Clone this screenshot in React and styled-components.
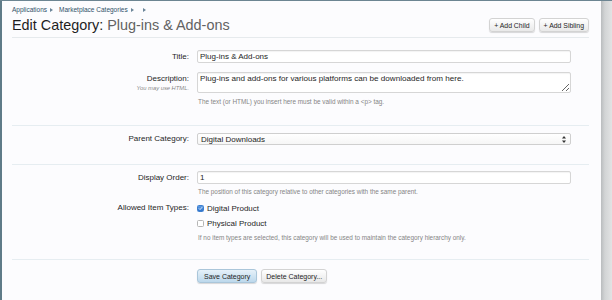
import React from "react";
import styled, { createGlobalStyle } from "styled-components";

const GlobalStyle = createGlobalStyle`
  html, body {
    margin: 0;
    padding: 0;
  }
  body {
    font-family: "Liberation Sans", Arial, sans-serif;
    background: #fcfcfe;
    color: #222;
  }
`;

function Check() {
  return (
    <svg width="7" height="7" viewBox="0 0 8 8">
      <path d="M1.8 4.2 L3.3 5.7 L6.3 2.3" fill="none" stroke="#fff" strokeWidth="1.3" strokeLinecap="round" strokeLinejoin="round" />
    </svg>
  );
}

function Arrows() {
  return (
    <svg width="4" height="7" viewBox="0 0 4 7">
      <path d="M2 0 L4 2.6 L0 2.6 Z" fill="#333" />
      <path d="M2 7 L4 4.4 L0 4.4 Z" fill="#333" />
    </svg>
  );
}

function App() {
  return (
    <>
      <GlobalStyle />
      <Page>
        <Main>
          <Header>
            <Breadcrumbs>
              <Crumb>Applications</Crumb>
              <Crumb>Marketplace Categories</Crumb>
              <Crumb />
            </Breadcrumbs>
            <TitleBar>
              <Title>
                Edit Category: <Subtitle>Plug-ins &amp; Add-ons</Subtitle>
              </Title>
              <TopButtons>
                <HeaderButton>+ Add Child</HeaderButton>
                <HeaderButton>+ Add Sibling</HeaderButton>
              </TopButtons>
            </TitleBar>
          </Header>

          <Section $top={12} $bottom={19}>
            <Row>
              <Label>Title:</Label>
              <Field>
                <TextInput defaultValue="Plug-ins & Add-ons" />
              </Field>
            </Row>
            <Row $gap={9}>
              <Label>
                Description:
                <SubLabel>You may use HTML.</SubLabel>
              </Label>
              <Field>
                <TextArea defaultValue="Plug-ins and add-ons for various platforms can be downloaded from here." />
                <Hint>The text (or HTML) you insert here must be valid within a &lt;p&gt; tag.</Hint>
              </Field>
            </Row>
          </Section>

          <Section $top={7} $bottom={19}>
            <Row>
              <Label $line={12}>Parent Category:</Label>
              <Field>
                <SelectBox>
                  <span>Digital Downloads</span>
                  <Arrows />
                </SelectBox>
              </Field>
            </Row>
          </Section>

          <Section $top={6} $bottom={17}>
            <Row>
              <Label>Display Order:</Label>
              <Field>
                <TextInput defaultValue="1" />
                <Hint $top={4}>The position of this category relative to other categories with the same parent.</Hint>
              </Field>
            </Row>
            <Row $gap={6}>
              <Label $line={12}>Allowed Item Types:</Label>
              <Field>
                <CheckRow>
                  <CheckBox $checked>
                    <Check />
                  </CheckBox>
                  Digital Product
                </CheckRow>
                <CheckRow $top={3}>
                  <CheckBox />
                  Physical Product
                </CheckRow>
                <Hint $top={5}>If no item types are selected, this category will be used to maintain the category hierarchy only.</Hint>
              </Field>
            </Row>
          </Section>

          <Row $gap={9}>
            <span />
            <SubmitButtons>
              <FormButton $primary>Save Category</FormButton>
              <FormButton>Delete Category...</FormButton>
            </SubmitButtons>
          </Row>
        </Main>
        <Gutter />
      </Page>
    </>
  );
}

const Page = styled.div`
  display: flex;
  height: 300px;
  box-sizing: border-box;
  border-top: 1px solid #6c8592;
  overflow: hidden;
`;

const Main = styled.div`
  flex: 1;
  border-left: 2px solid #5f7b88;
  padding: 0 12px 0 10px;
  background: #fcfcfe;
`;

const Gutter = styled.div`
  width: 11px;
  background: linear-gradient(to right, #b9bcbe, #d2d4d5 35%, #e2e3e4);
`;

const Header = styled.div`
  border-bottom: 1px solid #e6eaed;
  padding-bottom: 3px;
`;

const Breadcrumbs = styled.div`
  display: flex;
  align-items: center;
  margin-top: 5px;
  height: 8px;
  font-size: 6.5px;
  line-height: 8px;
  color: #2f5068;
`;

const Crumb = styled.span`
  display: inline-flex;
  align-items: center;
  margin-right: 6px;

  &::after {
    content: "";
    margin-left: 3px;
    border-left: 3px solid #6b8599;
    border-top: 2px solid transparent;
    border-bottom: 2px solid transparent;
  }
`;

const TitleBar = styled.div`
  display: flex;
  align-items: center;
  justify-content: space-between;
  height: 18px;
  margin-top: 2px;
`;

const Title = styled.h1`
  margin: 0;
  font-size: 14.4px;
  font-weight: normal;
  color: #1e1e1e;
  line-height: 18px;
`;

const Subtitle = styled.span`
  color: #626262;
`;

const TopButtons = styled.div`
  display: flex;
  gap: 4px;
`;

const HeaderButton = styled.button`
  box-sizing: border-box;
  height: 14px;
  padding: 0 4px;
  font-family: "Liberation Sans", Arial, sans-serif;
  font-size: 6.9px;
  color: #1e1e1e;
  border: 1px solid #d3d3d3;
  border-radius: 3px;
  background: linear-gradient(#ffffff, #e9e9e9);
  box-shadow: 0 1px 1px rgba(0, 0, 0, 0.15);
`;

const Section = styled.div`
  padding-top: ${(p) => p.$top}px;
  padding-bottom: ${(p) => p.$bottom}px;
  border-bottom: 1px solid #e6edf1;
`;

const Row = styled.div`
  display: grid;
  grid-template-columns: 177px 374px;
  column-gap: 8px;
  margin-top: ${(p) => p.$gap || 0}px;
`;

const Label = styled.div`
  text-align: right;
  font-size: 8px;
  line-height: ${(p) => p.$line || 13}px;
  color: #1e1e1e;
`;

const SubLabel = styled.div`
  font-size: 5.8px;
  line-height: 7px;
  font-style: italic;
  color: #888;
`;

const Field = styled.div`
  display: flex;
  flex-direction: column;
`;

const TextInput = styled.input`
  box-sizing: border-box;
  width: 100%;
  height: 13px;
  margin: 0;
  padding: 0 2px;
  font-family: "Liberation Sans", Arial, sans-serif;
  font-size: 8px;
  color: #1e1e1e;
  background: #fff;
  border: 1px solid #d6d6d6;
  border-radius: 2px;
  box-shadow: inset 0 1px 1px rgba(0, 0, 0, 0.05);
  outline: none;
`;

const TextArea = styled.textarea`
  box-sizing: border-box;
  display: block;
  width: 100%;
  height: 21px;
  margin: 0;
  padding: 1px 2px;
  font-family: "Liberation Sans", Arial, sans-serif;
  font-size: 8.1px;
  line-height: 9px;
  color: #1e1e1e;
  background: #fff;
  border: 1px solid #d6d6d6;
  border-radius: 2px;
  box-shadow: inset 0 1px 1px rgba(0, 0, 0, 0.05);
  outline: none;
`;

const Hint = styled.div`
  margin-top: ${(p) => p.$top || 5}px;
  padding-left: 1px;
  font-size: 6.4px;
  line-height: 8px;
  color: #858585;
`;

const SelectBox = styled.div`
  box-sizing: border-box;
  display: flex;
  align-items: center;
  justify-content: space-between;
  height: 12px;
  padding: 0 4px 0 3px;
  font-size: 8px;
  color: #1e1e1e;
  background: linear-gradient(#ffffff, #f6f6f6);
  border: 1px solid #cfcfcf;
  border-radius: 2px;
`;

const CheckRow = styled.div`
  display: flex;
  align-items: center;
  gap: 3px;
  height: 12px;
  margin-top: ${(p) => p.$top || 0}px;
  font-size: 8px;
  color: #1e1e1e;
`;

const CheckBox = styled.span`
  box-sizing: border-box;
  display: inline-flex;
  align-items: center;
  justify-content: center;
  width: 7px;
  height: 7px;
  border-radius: 1.5px;
  border: 1px solid ${(p) => (p.$checked ? "#3d7fcf" : "#b5b5b5")};
  background: ${(p) => (p.$checked ? "linear-gradient(#5d9be3, #2f74cc)" : "#fff")};
`;

const SubmitButtons = styled.div`
  display: flex;
  gap: 4px;
`;

const FormButton = styled.button`
  box-sizing: border-box;
  height: 14px;
  padding: 0 ${(p) => (p.$primary ? 6 : 4)}px;
  font-family: "Liberation Sans", Arial, sans-serif;
  font-size: 7px;
  color: #1e1e1e;
  border: 1px solid ${(p) => (p.$primary ? "#aac6da" : "#d3d3d3")};
  border-radius: 3px;
  background: ${(p) =>
    p.$primary ? "linear-gradient(#e6f1f9, #bcd8ec)" : "linear-gradient(#ffffff, #e8e8e8)"};
  box-shadow: 0 1px 1px rgba(0, 0, 0, 0.15);
`;

export default App;
